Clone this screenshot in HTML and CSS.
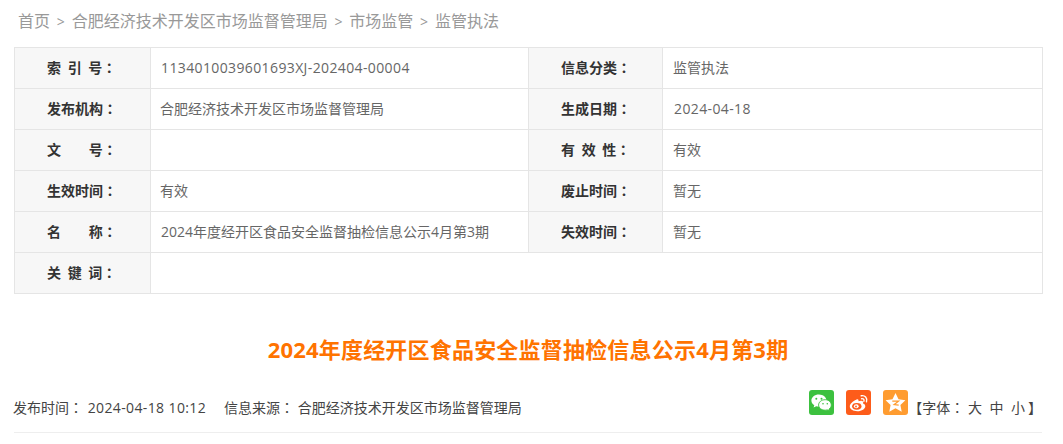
FILE: index.html
```html
<!DOCTYPE html>
<html lang="zh-CN">
<head>
<meta charset="utf-8">
<title>2024年度经开区食品安全监督抽检信息公示4月第3期</title>
<link rel="stylesheet" href="styles.css">
</head>
<body>
<nav class="crumbs"><a>首页</a><span class="sep">&gt;</span><a>合肥经济技术开发区市场监督管理局</a><span class="sep">&gt;</span><a>市场监管</a><span class="sep">&gt;</span><a>监管执法</a></nav>
<table class="meta">
<colgroup><col class="c1"><col class="c2"><col class="c3"><col class="c4"></colgroup>
<tr><th class="gap3">索 引 号<span class="colon">：</span></th><td><span class="num">1134010039601693XJ-202404-00004</span></td><th>信息分类<span class="colon">：</span></th><td>监管执法</td></tr>
<tr><th>发布机构<span class="colon">：</span></th><td>合肥经济技术开发区市场监督管理局</td><th>生成日期<span class="colon">：</span></th><td><span class="num">2024-04-18</span></td></tr>
<tr><th class="gap2">文 号<span class="colon">：</span></th><td></td><th class="gap3">有 效 性<span class="colon">：</span></th><td>有效</td></tr>
<tr><th>生效时间<span class="colon">：</span></th><td>有效</td><th>废止时间<span class="colon">：</span></th><td>暂无</td></tr>
<tr><th class="gap2">名 称<span class="colon">：</span></th><td><span class="lead">2024年度经开区食品安全监督抽检信息公示4月第3期</span></td><th>失效时间<span class="colon">：</span></th><td>暂无</td></tr>
<tr><th class="gap3">关 键 词<span class="colon">：</span></th><td colspan="3"></td></tr>
</table>
<h1 class="title">2024年度经开区食品安全监督抽检信息公示4月第3期</h1>
<div class="info">
<div class="left"><span class="pub">发布时间<span class="colon">：</span> <span class="num">2024-04-18 10:12</span></span><span>信息来源<span class="colon">：</span> 合肥经济技术开发区市场监督管理局</span></div>
<div class="right">
<span class="ico wx"><svg viewBox="0 0 25 25" width="25" height="25"><path d="M10 4.500c-4.400 0-7.600 2.700-7.600 6.100 0 2 1.100 3.600 2.900 4.700l-.7 2.200 2.600-1.300c.9.300 1.800.4 2.800.4 4.200 0 7.500-2.700 7.500-6s-3.300-6.100-7.500-6.100z" fill="#fff"/><path d="M16.200 9.700c-3.800 0-6.600 2.400-6.600 5.300s2.800 5.200 6.600 5.200c.8 0 1.500-.1 2.200-.3l2.100 1.100-.6-1.800c1.500-1 2.400-2.500 2.400-4.200 0-2.900-2.600-5.300-6.100-5.300z" fill="#fff" stroke="#3cc13f" stroke-width=".9"/><circle cx="7.300" cy="8.700" r="1" fill="#3cc13f"/><circle cx="12.500" cy="8.700" r="1" fill="#3cc13f"/><circle cx="14" cy="13.700" r=".8" fill="#3cc13f"/><circle cx="18.300" cy="13.700" r=".8" fill="#3cc13f"/></svg></span>
<span class="ico wb"><svg viewBox="0 0 25 25" width="25" height="25"><path d="M10.200 9.800C7 11.300 3.800 13.800 3.800 16.500c0 2.700 3.400 4.700 7.600 4.700 4.500 0 7.900-2.500 7.900-5 0-1.800-1.600-2.500-2.300-2.700.6-1.700 0-2.800-1.900-2.800-1 0-2 .4-2.600.6.300-1.700-.6-2.600-2.300-1.500z" fill="#fff"/><ellipse cx="10.800" cy="16.300" rx="4.700" ry="3.400" fill="#fd5c1a"/><ellipse cx="10.300" cy="16.300" rx="2.400" ry="2" fill="#fff"/><circle cx="10" cy="16.500" r=".9" fill="#fd5c1a"/><path d="M15.200 5.800c3.700-.8 6.400 2.100 5.300 6M15.600 8.700c1.800-.3 2.900.9 2.300 2.700" fill="none" stroke="#fff" stroke-width="1.400" stroke-linecap="round"/></svg></span>
<span class="ico qz"><svg viewBox="0 0 25 25" width="25" height="25"><path d="M12.500 3l3 6.300 6.900.9-5 4.700 1.300 6.800-6.200-3.400-6.200 3.400 1.300-6.800-5-4.700 6.900-.9z" fill="#fff"/><path d="M9.300 11.200h6.200l-4.300 3.400 4.500.5" fill="none" stroke="#ff9c30" stroke-width="1.300"/></svg></span>
<span class="size">【字体<span class="colon">：</span> 大<span class="opt">中</span><span class="opt">小</span><span class="close">】</span></span>
</div>
</div>
</body>
</html>
```
FILE: styles.css
```css
* { box-sizing: border-box; }
html, body { margin: 0; padding: 0; }
body {
  width: 1063px;
  height: 444px;
  overflow: hidden;
  background: #fff;
  font-family: "Open Sans", "Noto Sans CJK SC", sans-serif;
  color: #666;
}
.crumbs {
  height: 47px;
  padding: 9px 0 0 18px;
  font-size: 16px;
  line-height: 24px;
  color: #999;
}
.sep { margin: 0 6.8px; font-size: 14px; }
.colon { font-family: "Noto Sans CJK TC", sans-serif; font-feature-settings: "locl" 0; }
.num { letter-spacing: .38px; margin-left: 1px; }
.meta {
  width: 1028px;
  margin-left: 14px;
  border-collapse: collapse;
  table-layout: fixed;
  font-size: 14px;
}
.c1 { width: 136px; }
.c2 { width: 378px; }
.c3 { width: 134px; }
.c4 { width: 380px; }
.meta th, .meta td {
  height: 41px;
  border: 1px solid #e5e5e5;
  padding: 0 0 2px;
}
.meta th {
  background: #f7f7f7;
  color: #333;
  font-weight: 700;
  text-align: left;
  padding-left: 32px;
}
.gap3 { word-spacing: 3px; }
.gap2 { word-spacing: 24px; }
.meta td { padding-left: 9px; }
.meta td:last-child { padding-left: 10px; }
.lead { margin-left: 1px; }
.title {
  margin: 37px 7px 0 0;
  height: 36px;
  text-align: center;
  color: #ff7300;
  font-size: 22px;
  letter-spacing: .2px;
  line-height: 36px;
  font-weight: 700;
}
.info {
  width: 1028px;
  height: 43px;
  margin: 23px 0 0 14px;
  border-bottom: 1px solid #eee;
  display: flex;
  justify-content: space-between;
  font-size: 14px;
  color: #444;
}
.left { margin-left: -1px; padding-top: 6px; line-height: 22px; }
.pub { margin-right: 18px; }
.right { display: flex; align-items: flex-start; }
.ico { width: 25px; height: 25px; border-radius: 3px; margin-right: 12px; display: block; }
.ico svg { display: block; }
.wx { background: #3cc13f; }
.wb { background: #fd5c1a; }
.qz { background: #ff9c30; margin-right: 0; }
.size { padding-top: 6px; line-height: 22px; }
.opt { margin-left: 7.5px; }
.close { margin-left: 3px; }
```
